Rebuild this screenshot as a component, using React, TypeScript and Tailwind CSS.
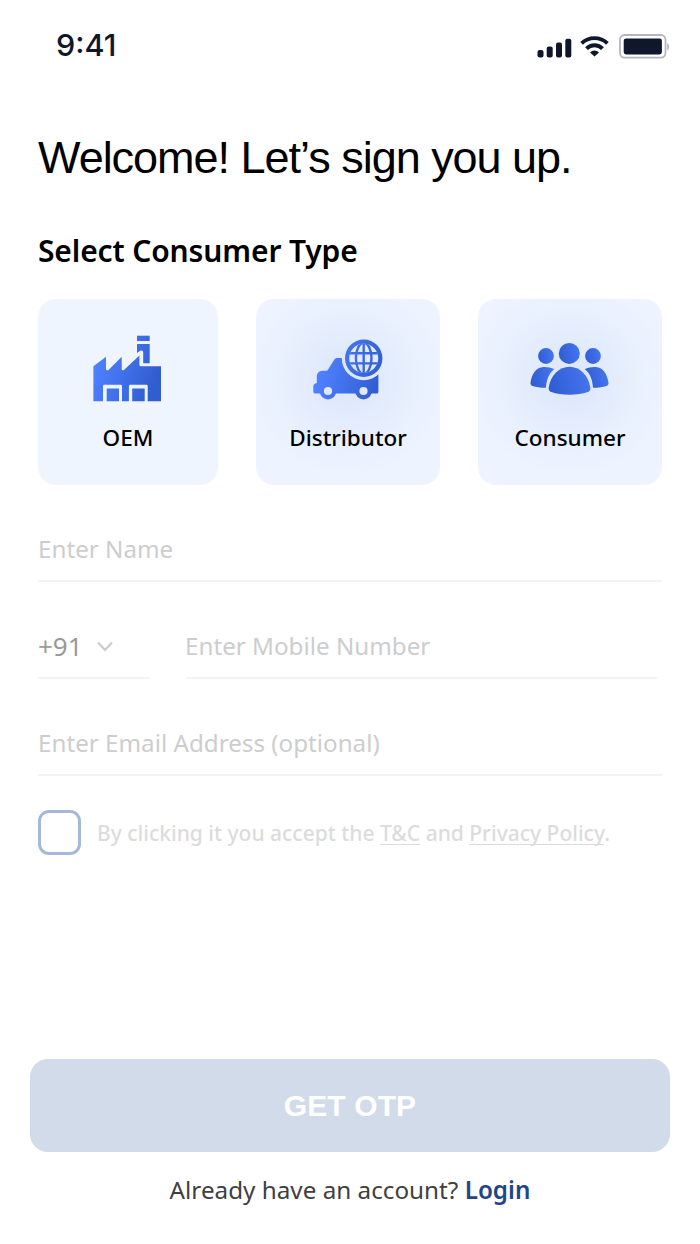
import type { ReactNode } from "react";

function SignalIcon() {
  return (
    <svg width="35" height="20" viewBox="0 0 35 20" fill="#0f172a">
      <rect x="0.5" y="12" width="6" height="7.5" rx="2" />
      <rect x="9.7" y="8.5" width="6" height="11" rx="2" />
      <rect x="19" y="4.5" width="6" height="15" rx="2" />
      <rect x="28.3" y="0.7" width="6" height="18.8" rx="2" />
    </svg>
  );
}

function WifiIcon() {
  return (
    <svg width="29" height="22" viewBox="0 0 29 22" fill="none" stroke="#0f172a" strokeWidth="3.9">
      <path d="M1.6 8.3a18.6 18.6 0 0 1 25.8 0" />
      <path d="M6.5 13.6a11.4 11.4 0 0 1 16 0" />
      <path d="M14.5 21.6l-4.5-4.2a6.3 6.3 0 0 1 9 0z" fill="#0f172a" stroke="none" />
    </svg>
  );
}

function BatteryIcon() {
  return (
    <svg width="51" height="25" viewBox="0 0 51 25" fill="none">
      <rect x="1" y="1" width="45.5" height="22.6" rx="4.5" stroke="#b4b6c0" strokeWidth="1.8" />
      <rect x="4.7" y="4.4" width="38.2" height="16" rx="2.4" fill="#0f172a" />
      <path d="M48.2 9v7.4c1.2-.6 2-2 2-3.7s-.8-3.1-2-3.7z" fill="#b4b6c0" />
    </svg>
  );
}

function FactoryIcon() {
  return (
    <svg width="69" height="67" viewBox="0 0 69 67" fill="url(#factory)">
      <defs>
        <linearGradient id="factory" gradientUnits="userSpaceOnUse" x1="5" y1="26" x2="62" y2="46">
          <stop stopColor="#4f80ff" />
          <stop offset="1" stopColor="#305dd0" />
        </linearGradient>
      </defs>
      <path d="M44 .7h12.7V6H44z" />
      <path d="M44 9h12.7v19.200h-6.500V17.500c0-1.800-1.500-2.700-3-1.700L44 18z" />
      <path d="M.4 66.300V31.200L13 21.700v12.200c0 1.400 1.500 1.900 2.500 1L28.700 21.700v12.200c0 1.400 1.600 1.700 2.500.8L46.400 20.500v9.300c0 .9.600 1.500 1.500 1.500H68v35H54.700V51.200c0-.8-.6-1.400-1.400-1.400h-16c-.8 0-1.400.6-1.400 1.400v15.100H29V51.200c0-.8-.6-1.400-1.400-1.400H11.400c-.8 0-1.400.6-1.400 1.400v15.100z" />
      <path d="M13.700 53.600H26v12.700H13.700zM39.200 53.600h12.500v12.700H39.200z" />
    </svg>
  );
}

function VanIcon() {
  return (
    <svg width="70" height="63" viewBox="0 0 70 63">
      <defs>
        <linearGradient id="van" gradientUnits="userSpaceOnUse" x1="8" y1="30" x2="66" y2="46">
          <stop stopColor="#4f80ff" />
          <stop offset="1" stopColor="#305dd0" />
        </linearGradient>
        <mask id="van-cut">
          <rect width="70" height="63" fill="#fff" />
          <circle cx="50.7" cy="20.3" r="21.9" fill="#000" />
          <circle cx="15" cy="53" r="4.1" fill="#000" />
          <circle cx="50.5" cy="53" r="4.1" fill="#000" />
        </mask>
        <clipPath id="globe-inner">
          <circle cx="50.7" cy="20.3" r="14.5" />
        </clipPath>
        <mask id="globe-cut">
          <rect width="70" height="63" fill="#fff" />
          <g clipPath="url(#globe-inner)">
            <rect x="34" y="4" width="34" height="34" fill="#000" />
            <g fill="none" stroke="#fff" strokeWidth="2.4">
              <path d="M50.7 4v34M34 15.2h34M34 25.4h34" />
              <ellipse cx="50.7" cy="20.3" rx="7.8" ry="15.4" />
            </g>
          </g>
        </mask>
      </defs>
      <g mask="url(#van-cut)" fill="url(#van)">
        <path d="M34 20H24.300c-1.400 0-2.400.5-3.100 1.700l-6.300 10.100c-.4.600-.8.800-1.500.9H9.200c-3.300.2-5.400 2.400-5.400 5.700v6.700c-2.300.4-3.500 1.500-3.500 3.600v4.500c0 1.500.9 2.300 2.300 2.300h61c1.100 0 1.800-.7 1.800-1.800V36.400L60 20z" />
        <circle cx="15" cy="53" r="8.4" />
        <circle cx="50.5" cy="53" r="8.4" />
      </g>
      <circle cx="50.7" cy="20.3" r="18.7" fill="url(#van)" mask="url(#globe-cut)" />
    </svg>
  );
}

function PeopleIcon() {
  return (
    <svg width="79" height="54" viewBox="0 0 79 54">
      <defs>
        <linearGradient id="people" x1="0" y1="0.6" x2="1" y2="0.4">
          <stop stopColor="#305dd0" />
          <stop offset="1" stopColor="#4675f2" />
        </linearGradient>
      </defs>
      <g fill="url(#people)">
        <circle cx="39.3" cy="11.4" r="10.5" />
        <circle cx="16" cy="14" r="7.9" />
        <circle cx="63" cy="14" r="7.9" />
        <path d="M39.500 24.700c10 0 19 8.300 20.800 20.800.3 2.200-.6 3.800-2.600 4.600-10 3.500-26.400 3.500-36.400 0-2-.8-2.900-2.400-2.600-4.600C20.500 33 29.500 24.700 39.500 24.700z" />
        <path d="M24.300 27.300C19.600 30.500 16.700 36.500 16 45.700c-5 .1-9.500-.6-13.500-1.800-1.500-.5-2.200-1.700-2-3.200C1.800 31.500 6.500 25.500 13 25c4-.3 8 .5 11.300 2.300z" />
        <path d="M54.700 27.300c4.700 3.200 7.600 9.200 8.300 18.400 5 .1 9.500-.6 13.500-1.800 1.500-.5 2.200-1.700 2-3.200C77.200 31.500 72.500 25.500 66 25c-4-.3-8 .5-11.300 2.300z" />
      </g>
    </svg>
  );
}

const glow = "bg-[radial-gradient(circle_at_50%_43%,#dce6fb_0%,#e2ebfc_25%,#e9f1fe_52%,#eef4ff_75%)]";

const consumerTypes: { name: string; icon: ReactNode; className: string; iconClass: string }[] = [
  { name: "OEM", icon: <FactoryIcon />, className: "w-[180px] bg-[#eef5ff]", iconClass: "pr-px pb-0.5" },
  { name: "Distributor", icon: <VanIcon />, className: `w-[184px] ${glow}`, iconClass: "" },
  { name: "Consumer", icon: <PeopleIcon />, className: `w-[184px] ${glow}`, iconClass: "pr-px" },
];

export default function App() {
  return (
    <div className="flex h-[1244px] w-[700px] flex-col overflow-hidden whitespace-nowrap bg-white font-['Noto_Sans',sans-serif]">
      <header className="flex h-[92px] items-center justify-between pl-[56px] pr-[30px]">
        <span className="pb-0.5 font-['Inter',sans-serif] text-[30.5px] font-[450] text-[#0f172a]">9:41</span>
        <div className="flex items-center">
          <span className="pt-[3px]">
            <SignalIcon />
          </span>
          <span className="ml-2">
            <WifiIcon />
          </span>
          <span className="ml-2.5">
            <BatteryIcon />
          </span>
        </div>
      </header>

      <main className="flex flex-col px-[38px]">
        <h1 className="mt-[38px] h-[56px] font-['Liberation_Sans',sans-serif] text-[45px] leading-[56px] tracking-[-1.02px] text-black">
          Welcome! Let’s sign you up.
        </h1>
        <h2 className="mt-[45px] h-[40px] text-[30px] font-semibold leading-[40px] tracking-[-0.13px] text-black">
          Select Consumer Type
        </h2>

        <div className="mt-[28px] flex justify-between">
          {consumerTypes.map((type) => (
            <button
              key={type.name}
              className={`flex h-[186px] flex-col items-center rounded-[18px] ${type.className}`}
            >
              <span className={`mt-[34px] flex h-[72px] items-center justify-center ${type.iconClass}`}>
                {type.icon}
              </span>
              <span className="mt-[18px] text-[22.5px] font-medium leading-[30px] text-black">
                {type.name}
              </span>
            </button>
          ))}
        </div>

        <div className="mt-[34px] h-[63px] border-b-2 border-[#f3f3f3] text-[24.2px] leading-[59px] text-[#cdcdcd]">
          Enter Name
        </div>
        <div className="mt-[34px] flex pr-[5px] text-[24.2px] leading-[59px]">
          <div className="flex h-[63px] w-[112px] items-center border-b-2 border-[#f3f3f3] pb-px text-[26px] text-[#999999]">
            +91
            <svg className="ml-3.5" width="16" height="11" viewBox="0 0 16 11" fill="none">
              <path d="M1 1.5l7 7.5 7-7.5" stroke="#cbcbcb" strokeWidth="2.2" />
            </svg>
          </div>
          <div className="ml-9 h-[63px] flex-1 border-b-2 border-[#f3f3f3] text-[#cdcdcd]">
            <span className="-ml-px">Enter Mobile Number</span>
          </div>
        </div>
        <div className="mt-[34px] h-[63px] border-b-2 border-[#f3f3f3] text-[24.2px] leading-[59px] text-[#cdcdcd]">
          Enter Email Address (optional)
        </div>

        <div className="mt-[34px] flex items-center">
          <span className="h-[45px] w-[43px] rounded-[11px] border-[3px] border-[#a5b8d8]" />
          <p className="ml-4 text-[21px] font-medium leading-[30px] text-[#dcdcdc]">
            By clicking it you accept the{" "}
            <a className="underline decoration-1 underline-offset-[3px] [text-decoration-skip-ink:none]">T&amp;C</a> and{" "}
            <a className="underline decoration-1 underline-offset-[3px] [text-decoration-skip-ink:none]">Privacy Policy</a>.
          </p>
        </div>
      </main>

      <footer className="mt-auto flex flex-col items-center px-[30px] pb-[37px]">
        <button className="h-[93px] w-full rounded-[18px] bg-[#d2dbea] font-['Liberation_Sans',sans-serif] text-[30px] font-bold tracking-[0.1px] text-white">
          GET OTP
        </button>
        <p className="mt-[21px] text-[24.25px] leading-[34px] text-[#404040]">
          Already have an account? <a className="font-semibold text-[#1f4788]">Login</a>
        </p>
      </footer>
    </div>
  );
}
